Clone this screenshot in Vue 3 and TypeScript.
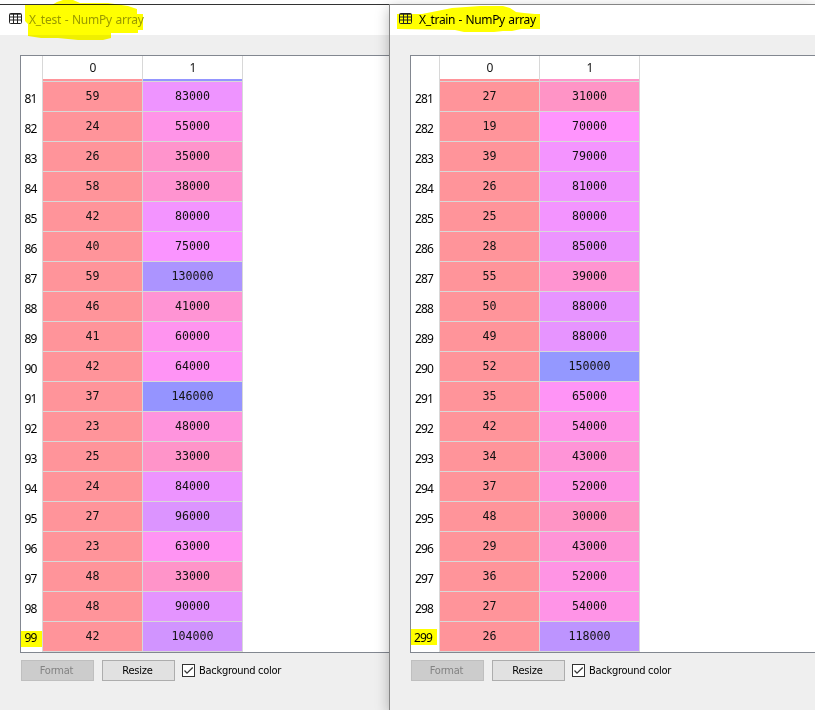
<script setup lang="ts">
interface Pane {
  name: string
  title: string
  start: number
  peek: number
  ages: number[]
  salaries: number[]
}

const MAX = 150000

const panes: Pane[] = [
  {
    name: 'test',
    title: 'X_test - NumPy array',
    start: 81,
    peek: 148000,
    ages: [59, 24, 26, 58, 42, 40, 59, 46, 41, 42, 37, 23, 25, 24, 27, 23, 48, 48, 42],
    salaries: [83000, 55000, 35000, 38000, 80000, 75000, 130000, 41000, 60000, 64000, 146000, 48000, 33000, 84000, 96000, 63000, 33000, 90000, 104000],
  },
  {
    name: 'train',
    title: 'X_train - NumPy array',
    start: 281,
    peek: 34000,
    ages: [27, 19, 39, 26, 25, 28, 55, 50, 49, 52, 35, 42, 34, 37, 48, 29, 36, 27, 26],
    salaries: [31000, 70000, 79000, 81000, 80000, 85000, 39000, 88000, 88000, 150000, 65000, 54000, 43000, 52000, 30000, 43000, 52000, 54000, 118000],
  },
]

// Hue runs from red (low) to blue (high), blended at 60% over white.
function shade(value: number): string {
  const h = (0.99 - (0.33 * value) / MAX) * 6
  const channel = (n: number): number => {
    const k = (n + h) % 6
    const c = 1 - 0.7 * Math.max(0, Math.min(k, 4 - k, 1))
    return Math.round(255 * (0.4 + 0.6 * c))
  }
  return `rgb(${channel(5)}, ${channel(3)}, ${channel(1)})`
}
</script>

<template>
  <main class="desktop">
    <section v-for="pane in panes" :key="pane.name" class="window" :class="pane.name">
      <header class="titlebar">
        <svg v-if="pane.name === 'test'" class="marker" width="150" height="44" viewBox="0 0 150 44">
          <path d="M25 5H52L57 2L63 0H73L80 3H108L128 6L137 9V14H143V30H138V33H111V38L103 40H78L58 38H41L28 36V24L25 21Z" fill="#ff0" />
        </svg>
        <svg v-else class="marker" width="160" height="44" viewBox="0 0 160 44">
          <path d="M7 14H32L47 11L62 8L90 6H113L120 8L126 12L134 13L145 14H150V29H131L122 31H113L104 32H74L65 30L7 29Z" fill="#ff0" />
        </svg>
        <svg class="grid-icon" width="13" height="11" viewBox="0 0 13 11">
          <rect x=".5" y=".5" width="12" height="10" rx="1" fill="none" stroke="currentColor" />
          <path d="M1 1.2H12M1 4H12M1 7H12M4.5 1V10M8.5 1V10" stroke="currentColor" fill="none" />
        </svg>
        <span class="title">{{ pane.title }}</span>
      </header>
      <div class="content">
        <div class="table">
          <div class="row head">
            <span class="index"></span>
            <span class="cell">0</span>
            <span class="cell">1</span>
          </div>
          <div class="row peek">
            <span class="index"></span>
            <span class="cell" :style="{ backgroundColor: shade(40) }"></span>
            <span class="cell" :style="{ backgroundColor: shade(pane.peek) }"></span>
          </div>
          <div v-for="(age, i) in pane.ages" :key="i" class="row">
            <span class="index"><span :class="{ marked: i === 18 }">{{ pane.start + i }}</span></span>
            <span class="cell" :style="{ backgroundColor: shade(age) }">{{ age }}</span>
            <span class="cell" :style="{ backgroundColor: shade(pane.salaries[i]) }">{{ pane.salaries[i] }}</span>
          </div>
        </div>
        <footer class="controls">
          <button class="button" disabled>Format</button>
          <button class="button">Resize</button>
          <label class="check">
            <svg width="13" height="13" viewBox="0 0 13 13">
              <rect x=".5" y=".5" width="12" height="12" fill="#fff" stroke="#333" />
              <path d="M2.5 6.5L5 9.2L10.7 3.5" fill="none" stroke="#333" stroke-width="1.2" />
            </svg>
            <span>Background color</span>
          </label>
        </footer>
      </div>
    </section>
  </main>
</template>

<style>
body {
  background: #fff;
  overflow: hidden;
}
</style>

<style scoped>
.desktop {
  display: flex;
  box-sizing: border-box;
  width: 815px;
  height: 710px;
  padding-top: 4px;
  overflow: hidden;
  font-family: "Noto Sans", sans-serif;
  color: #000;
  background: #fff;
}
.window {
  box-sizing: border-box;
  display: flex;
  flex-direction: column;
  background: #efefef;
  border-top: 1px solid #333;
}
.test {
  width: 389px;
}
.train {
  position: relative;
  width: 426px;
  border-top-color: #858585;
  border-left: 1px solid #858585;
  box-shadow: 0 4px 13px rgba(0, 0, 0, 0.27);
}
.titlebar {
  position: relative;
  display: flex;
  align-items: center;
  box-sizing: border-box;
  height: 30px;
  padding-left: 9px;
  background: #fff;
}
.marker {
  position: absolute;
  left: 0;
  top: -5px;
  mix-blend-mode: multiply;
}
.grid-icon {
  position: relative;
  color: #222;
  margin-bottom: 3px;
}
.title {
  position: relative;
  margin-left: 7px;
  font-size: 12px;
  line-height: 30px;
  letter-spacing: -0.25px;
  word-spacing: 0.8px;
  white-space: nowrap;
}
.test .title {
  color: #999900;
}
.train .title {
  letter-spacing: -0.38px;
}
.content {
  padding: 20px 0 0 20px;
}
.table {
  box-sizing: border-box;
  height: 598px;
  border: 1px solid #828790;
  border-right: 0;
  background: #fff;
}
.row {
  display: flex;
  height: 30px;
}
.index {
  box-sizing: border-box;
  width: 22px;
  border-right: 1px solid #d8d8d8;
  padding: 4px 2px 0 0;
  font-size: 12px;
  line-height: 25px;
  letter-spacing: -0.8px;
  text-align: center;
}
.train .index {
  width: 29px;
}
.cell {
  box-sizing: border-box;
  width: 100px;
  border-right: 1px solid #d8d8d8;
  border-bottom: 1px solid #d8d8d8;
  font: 11.65px/28px "DejaVu Sans Mono", monospace;
  color: #111;
  text-align: center;
}
.head {
  height: 23px;
}
.head .cell {
  border-bottom: 0;
  padding-left: 1px;
  font: 12px/23px "Noto Sans", sans-serif;
}
.peek {
  height: 3px;
}
.marked {
  display: block;
  height: 16px;
  margin: 5px -2px 0 0;
  padding-right: 2px;
  line-height: 14px;
  background: #ff0;
}
.train .marked {
  width: 24px;
  margin-top: 3px;
  line-height: 18px;
}
.controls {
  display: flex;
  align-items: center;
  height: 21px;
  padding: 7px 0 0 1px;
}
.button {
  box-sizing: border-box;
  width: 73px;
  height: 21px;
  margin: 0 8px 0 0;
  padding: 0 2px 0 0;
  border: 1px solid #adadad;
  background: #e1e1e1;
  font: 11px/19px "DejaVu Sans Condensed", "Noto Sans", sans-serif;
  letter-spacing: -0.2px;
  color: #000;
}
.button:disabled {
  background: #ccc;
  border-color: #bfbfbf;
  color: #838383;
}
.check {
  display: flex;
  align-items: center;
  gap: 4px;
  margin-left: -1px;
  font: 11px/20px "DejaVu Sans Condensed", "Noto Sans", sans-serif;
  letter-spacing: -0.28px;
  white-space: nowrap;
}
</style>
